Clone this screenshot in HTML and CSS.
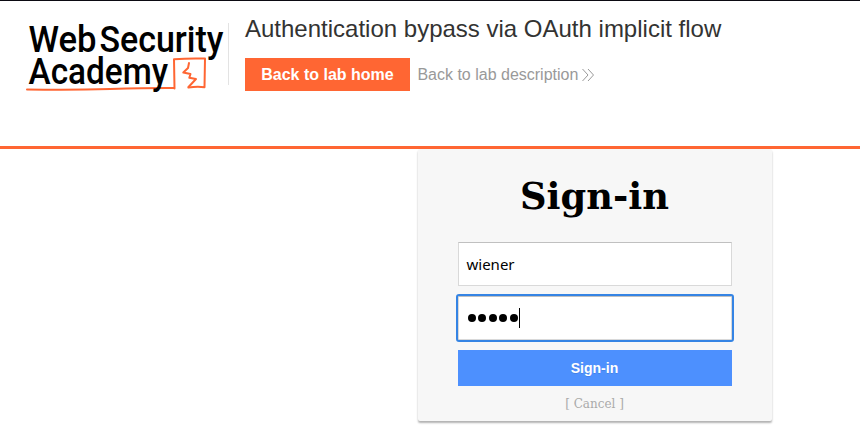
FILE: index.html
```html
<!DOCTYPE html>
<html lang="en">
<head>
<meta charset="utf-8">
<title>Sign-in</title>
<link rel="stylesheet" href="styles.css">
</head>
<body>
<header class="lab-header">
  <svg class="logo" width="200" height="76" viewBox="25 20 200 76" role="img" aria-label="Web Security Academy">
    <g class="logo-text">
      <text x="28.6" y="52" textLength="68" lengthAdjust="spacingAndGlyphs">Web</text>
      <text x="99.4" y="52" textLength="124" lengthAdjust="spacingAndGlyphs">Security</text>
    </g>
    <g class="logo-line">
      <path d="M27 89.4 Q70 90.2 110 89 T174 88"/>
      <path d="M174.5 88.5 L174 59.3 Q190 58 205 58.6 L204.5 87.2 Q197 86.3 188.5 87.5"/>
      <path d="M189 63 L188 68 L183.3 72.5 L190.5 74 L189.3 77.7 L196 79 L188.5 87"/>
    </g>
    <g class="logo-text">
      <text x="28.6" y="84" textLength="139.5" lengthAdjust="spacingAndGlyphs">Academy</text>
    </g>
  </svg>
  <div class="title">
    <h2>Authentication bypass via OAuth implicit flow</h2>
    <div class="links">
      <a class="button">Back to lab home</a>
      <a class="link-back">Back to lab description
        <svg width="12" height="12" viewBox="0 0 12 12"><path d="M.5 0 L6 6 L.5 12 M6 0 L11.5 6 L6 12"/></svg>
      </a>
    </div>
  </div>
</header>
<main class="login-card">
  <h1>Sign-in</h1>
  <form>
    <div class="field">wiener</div>
    <div class="field focused"><span class="dots"><i></i><i></i><i></i><i></i><i></i></span><span class="caret"></span></div>
    <button class="submit" type="button">Sign-in</button>
  </form>
  <div class="help"><a>[ Cancel ]</a></div>
</main>
</body>
</html>
```
FILE: styles.css
```css
* { box-sizing: border-box; }
body { margin: 0; height: 446px; overflow: hidden; background: #fff; border-top: 1px solid #0b0a12; font-family: "Liberation Sans", Arial, sans-serif; }
.lab-header { display: flex; height: 148px; padding: 19px 0 0 25px; border-bottom: 3px solid #ff6633; }
.logo { flex: none; overflow: visible; }
.logo-text { font-family: Roboto, sans-serif; font-size: 37.5px; font-weight: 500; fill: #000; }
.logo-line { fill: none; stroke: #ff6633; stroke-width: 2; stroke-linejoin: round; stroke-linecap: round; }
.title { height: 62px; margin: 3px 0 0 3px; padding-left: 16px; border-left: 1px solid #e3e3e3; }
h2 { margin: -8px 0 0; font-size: 24px; font-weight: 400; line-height: 27px; color: #333332; white-space: nowrap; }
.links { display: flex; align-items: center; margin-top: 16px; }
.button { width: 165px; height: 33px; line-height: 33px; text-align: center; font-size: 16px; font-weight: 700; color: #fff; background: #ff6633; }
.link-back { display: flex; align-items: center; gap: 4px; margin-left: 7.4px; font-size: 16px; color: #999; white-space: nowrap; }
.link-back svg { fill: none; stroke: #999; stroke-width: 1; }
.login-card { width: 354px; height: 272px; margin-left: 417.5px; padding: 0 40px; background: #f7f7f7; border-radius: 2px; box-shadow: 0 2px 2px rgba(0, 0, 0, .3); }
h1 { margin: 0; padding-top: 26px; height: 93px; font: 700 36.8px/43px "DejaVu Serif", serif; text-align: center; color: #000; }
.field { display: flex; align-items: center; width: 274px; height: 44px; margin-bottom: 10px; padding: 0 8px; border: 1px solid #d9d9d9; border-top-color: #c0c0c0; background: #fff; color: #000; font: 15px "Noto Sans", sans-serif; }
.focused { outline: 2px solid #3584e4; border-radius: 1px; }
.dots { display: flex; gap: 2.5px; padding-left: 1px; }
.dots i { width: 8px; height: 8px; border-radius: 50%; background: #000; }
.caret { width: 1px; height: 20px; margin-left: 1.5px; background: #000; }
.submit { display: block; width: 274px; height: 36px; padding: 0; border: 0; background: #4d90fe; color: #fff; font: 700 14px "Liberation Sans", Arial, sans-serif; text-shadow: 0 1px rgba(0, 0, 0, .1); }
.help { margin-top: 9px; text-align: center; font: 12px/18px "DejaVu Serif", serif; color: #aaa; }
```
